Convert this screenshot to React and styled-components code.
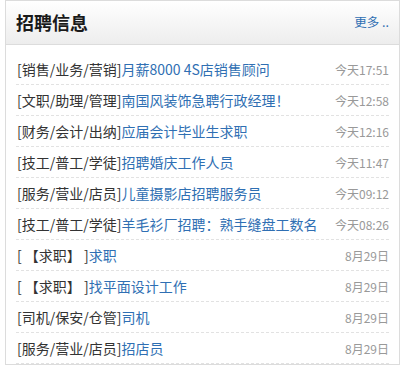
import React from "react";
import styled, { createGlobalStyle } from "styled-components";

const jobs = [
  { cat: "[销售/业务/营销]", title: "月薪8000 4S店销售顾问", time: "今天17:51" },
  { cat: "[文职/助理/管理]", title: "南国风装饰急聘行政经理！", time: "今天12:58" },
  { cat: "[财务/会计/出纳]", title: "应届会计毕业生求职", time: "今天12:16" },
  { cat: "[技工/普工/学徒]", title: "招聘婚庆工作人员", time: "今天11:47" },
  { cat: "[服务/营业/店员]", title: "儿童摄影店招聘服务员", time: "今天09:12" },
  { cat: "[技工/普工/学徒]", title: "羊毛衫厂招聘：熟手缝盘工数名", time: "今天08:26" },
  { cat: "[ 【求职】 ]", title: "求职", time: "8月29日" },
  { cat: "[ 【求职】 ]", title: "找平面设计工作", time: "8月29日" },
  { cat: "[司机/保安/仓管]", title: "司机", time: "8月29日" },
  { cat: "[服务/营业/店员]", title: "招店员", time: "8月29日" },
];

function App() {
  return (
    <>
      <GlobalStyle />
      <Panel>
        <Header>
          <Title>招聘信息</Title>
          <More href="#">更多 ..</More>
        </Header>
        <List>
          {jobs.map((job, i) => (
            <Row key={i}>
              <Cat>{job.cat}</Cat>
              <JobLink href="#">{job.title}</JobLink>
              <Time>{job.time}</Time>
            </Row>
          ))}
        </List>
      </Panel>
    </>
  );
}

export default App;

const GlobalStyle = createGlobalStyle`
  body {
    margin: 0;
    background: #fff;
    font-family: "Noto Sans CJK SC", "Noto Sans", sans-serif;
  }
`;

const Panel = styled.div`
  margin-left: 5px;
  width: 393px;
  border: 1px solid #dcdcdc;
  background: #fff;
`;

const Header = styled.div`
  height: 43px;
  display: flex;
  align-items: center;
  justify-content: space-between;
  padding: 0 10px 0 10px;
  background: linear-gradient(to bottom, #ffffff, #ededed);
  border-bottom: 1px solid #dcdcdc;
`;

const Title = styled.h2`
  margin: 0;
  font-size: 18px;
  font-weight: bold;
  color: #1a1a1a;
  margin-top: -2px;
`;

const More = styled.a`
  font-size: 12.5px;
  color: #2f6fb3;
  text-decoration: none;
  margin-top: -2px;
  white-space: pre;
`;

const List = styled.ul`
  list-style: none;
  margin: 0;
  padding: 9px 10px 0 10px;
`;

const Row = styled.li`
  display: flex;
  align-items: center;
  height: 30px;
  border-bottom: 1px dashed #e2e2e2;
  font-size: 14px;
  white-space: pre;
`;

const Cat = styled.span`
  color: #333;
  padding-left: 1px;
`;

const JobLink = styled.a`
  color: #2f6fb3;
  text-decoration: none;
  flex: 1;
`;

const Time = styled.span`
  color: #999;
  font-size: 12px;
`;
